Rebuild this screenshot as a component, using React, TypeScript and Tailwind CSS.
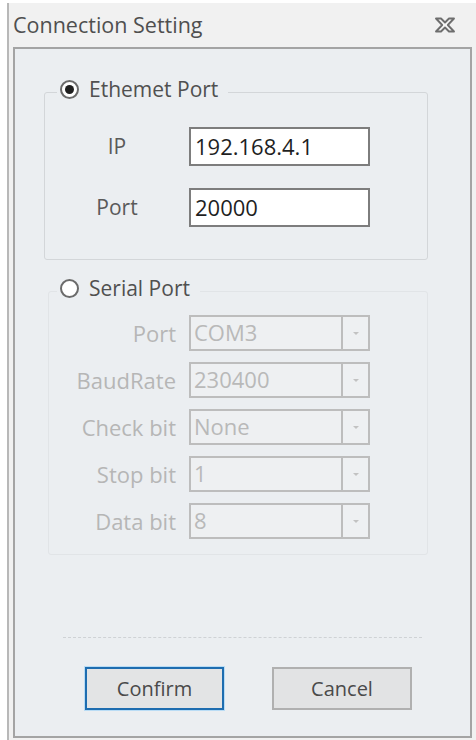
import { ReactNode } from "react";

const SERIAL_FIELDS = [
  { label: "Port", value: "COM3" },
  { label: "BaudRate", value: "230400" },
  { label: "Check bit", value: "None" },
  { label: "Stop bit", value: "1" },
  { label: "Data bit", value: "8" },
];

function CloseGlyph() {
  return (
    <svg width="22" height="16" viewBox="0 0 22 16" fill="none">
      <path
        d="M2 1.5h5l4 4 4-4h5l-6.2 6.5L20 14.5h-5l-4-4-4 4H2l6.2-6.5z"
        fill="#f7f7f7"
        stroke="#6e6e6e"
        strokeWidth="1.9"
        strokeLinejoin="round"
      />
    </svg>
  );
}

function Radio({ checked, children }: { checked: boolean; children: ReactNode }) {
  return (
    <span className="flex items-center gap-[10px]">
      <span className="flex h-[19px] w-[19px] items-center justify-center rounded-full border-2 border-[#6b6b6b] bg-white">
        {checked && <span className="h-[9px] w-[9px] rounded-full bg-[#1f1f1f]" />}
      </span>
      <span className="text-[21px] leading-[24px] text-[#505050]">{children}</span>
    </span>
  );
}

function DisabledCombo({ value }: { value: string }) {
  return (
    <div className="flex h-[36px] w-[181px] border-2 border-[#bdbdbd] bg-[#eef0f2]">
      <span className="flex-1 pl-[3px] text-[22px] leading-[31px] text-[#b9b9b9]">
        {value}
      </span>
      <span className="flex w-[27px] items-center justify-center border-l-2 border-[#bdbdbd]">
        <span className="h-0 w-0 border-x-[3px] border-t-[3px] border-x-transparent border-t-[#c2c2c2]" />
      </span>
    </div>
  );
}

export default function App() {
  return (
    <div className="h-[740px] w-[476px] bg-white pt-[3px] pl-[7px] font-['Open_Sans',sans-serif]">
      <div className="flex h-full flex-col border-l-2 border-[#b8b8b8] bg-[#f1f1f1]">
        <div className="flex h-[44px] shrink-0 items-center justify-between pl-[4px] pr-[20px]">
          <span className="text-[21.5px] text-[#4f4f4f]">Connection Setting</span>
          <CloseGlyph />
        </div>

        <div className="ml-[4px] mr-[4px] flex h-[691px] flex-col border-2 border-[#a4a4a4] bg-[#ebeef1]">
          <fieldset className="ml-[29px] mt-[28px] w-[384px] rounded-[3px] border border-[#d3d6d9] pb-[32px]">
            <legend className="ml-[12px] pb-[6px] pl-[3px] pr-[10px]">
              <Radio checked>Ethemet Port</Radio>
            </legend>
            <div className="mt-[20px] flex flex-col gap-[22px]">
              <div className="flex items-center">
                <span className="w-[144px] text-center text-[21px] text-[#5a5a5a]">IP</span>
                <div className="h-[39px] w-[181px] border-2 border-[#7d7d7d] bg-white pl-[4px] text-[22px] leading-[34px] text-[#1f1f1f]">
                  192.168.4.1
                </div>
              </div>
              <div className="flex items-center">
                <span className="w-[144px] text-center text-[21px] text-[#5a5a5a]">Port</span>
                <div className="h-[39px] w-[181px] border-2 border-[#7d7d7d] bg-white pl-[4px] text-[22px] leading-[34px] text-[#1f1f1f]">
                  20000
                </div>
              </div>
            </div>
          </fieldset>

          <fieldset className="ml-[33px] mt-[16px] w-[380px] rounded-[3px] border border-[#e1e4e7] pb-[15px]">
            <legend className="ml-[8px] pb-[6px] pl-[3px] pr-[10px]">
              <Radio checked={false}>Serial Port</Radio>
            </legend>
            <div className="mt-[9px] flex flex-col gap-[11px]">
              {SERIAL_FIELDS.map((field) => (
                <div key={field.label} className="flex items-center">
                  <span className="w-[127px] text-right text-[22px] text-[#b6b6b6]">
                    {field.label}
                  </span>
                  <span className="w-[13px]" />
                  <DisabledCombo value={field.value} />
                </div>
              ))}
            </div>
          </fieldset>

          <div className="mx-[48px] mt-[82px] border-t border-dashed border-[#cfd2d5]" />

          <div className="mt-[29px] flex gap-[48px] pl-[70px]">
            <button
              type="button"
              className="h-[43px] w-[139px] border-2 border-[#1e6db0] bg-[#e3e4e5] text-[20px] text-[#4a4a4a] shadow-[0_0_0_1px_#b9dcf5]"
            >
              Confirm
            </button>
            <button
              type="button"
              className="h-[43px] w-[140px] border-2 border-[#b0b0b0] bg-[#e2e3e4] text-[20px] text-[#4a4a4a]"
            >
              Cancel
            </button>
          </div>
        </div>
      </div>
    </div>
  );
}
